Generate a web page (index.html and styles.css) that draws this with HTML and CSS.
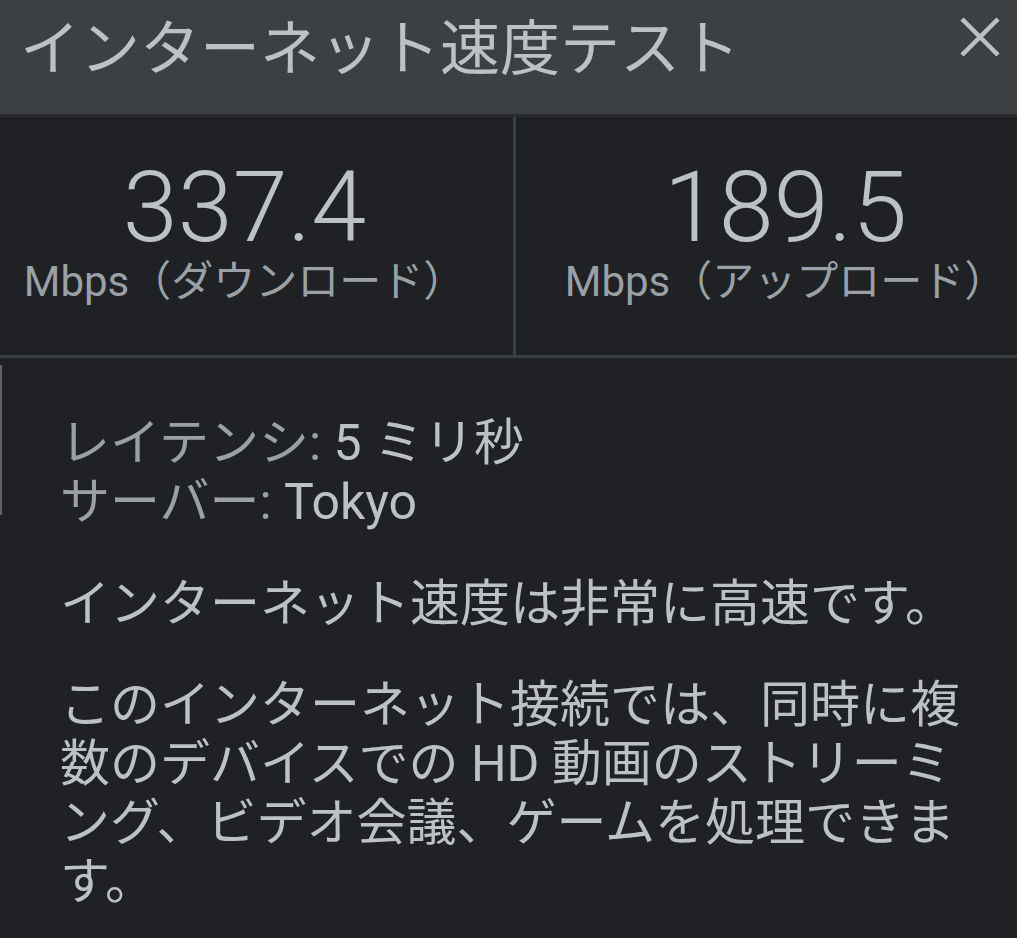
FILE: index.html
```html
<!DOCTYPE html>
<html lang="ja">
<head>
    <meta charset="UTF-8">
    <meta name="viewport" content="width=device-width, initial-scale=1.0">
    <title>インターネット速度テスト</title>
    <link rel="stylesheet" href="styles.css">
</head>
<body>

<div class="header">
    <h1 class="title">インターネット速度テスト</h1>
    <span class="close">
        <svg width="42" height="42" viewBox="0 0 42 42">
            <path d="M3 3 L39 39 M39 3 L3 39" stroke="#bdc1c6" stroke-width="4.5" fill="none"/>
        </svg>
    </span>
</div>

<div class="stats">
    <div class="stat stat-down">
        <div class="value">337.4</div>
        <div class="unit">Mbps（ダウンロード）</div>
    </div>
    <div class="stat stat-up">
        <div class="value">189.5</div>
        <div class="unit">Mbps（アップロード）</div>
    </div>
</div>

<div class="info">
    <div class="meta">
        <div><span class="label">レイテンシ:</span> <span class="val">5 ミリ秒</span></div>
        <div><span class="label">サーバー:</span> <span class="val">Tokyo</span></div>
    </div>
    <p class="summary">インターネット速度は非常に高速です。</p>
    <p class="detail">このインターネット接続では、同時に複数のデバイスでの HD 動画のストリーミング、ビデオ会議、ゲームを処理できます。</p>
</div>

</body>
</html>
```

FILE: styles.css
```css
* {
    margin: 0;
    padding: 0;
    box-sizing: border-box;
}

body {
    font-family: Roboto, "Noto Sans CJK JP", sans-serif;
    background-color: #202124;
    color: #bdc1c6;
    width: 1017px;
    height: 938px;
    overflow: hidden;
}

.header {
    display: flex;
    justify-content: space-between;
    align-items: flex-start;
    height: 117px;
    background-color: #3c4043;
    border-bottom: 3px solid #2a2b2e;
    padding: 0 16px 0 20px;
}

.title {
    font-family: "Noto Sans CJK JP", sans-serif;
    font-weight: 400;
    font-size: 60px;
    line-height: 88px;
    white-space: nowrap;
    color: #bdc1c6;
}

.close {
    display: flex;
    margin-top: 16px;
}

.stats {
    display: grid;
    grid-template-columns: 516px 1fr;
    height: 241px;
    border-bottom: 3px solid #3c4043;
}

.stat {
    text-align: center;
    padding-top: 42px;
}

.stat-down {
    border-right: 3px solid #3c4043;
    padding-right: 24px;
}

.stat-up {
    padding-left: 38px;
}

.value {
    font-size: 99px;
    font-weight: 300;
    line-height: 96px;
    color: #bdc1c6;
}

.unit {
    font-size: 42px;
    line-height: 50px;
    margin-top: 2px;
    color: #9aa0a6;
    white-space: nowrap;
}

.info {
    position: relative;
    padding: 56px 52px 0 60px;
    font-size: 50px;
    line-height: 59px;
}

.info::before {
    content: "";
    position: absolute;
    left: 0;
    top: 7px;
    width: 2px;
    height: 150px;
    background-color: #5f6368;
}

.label {
    color: #9aa0a6;
}

.val {
    color: #bdc1c6;
}

.summary {
    margin-top: 43px;
}

.detail {
    margin-top: 42px;
}
```
